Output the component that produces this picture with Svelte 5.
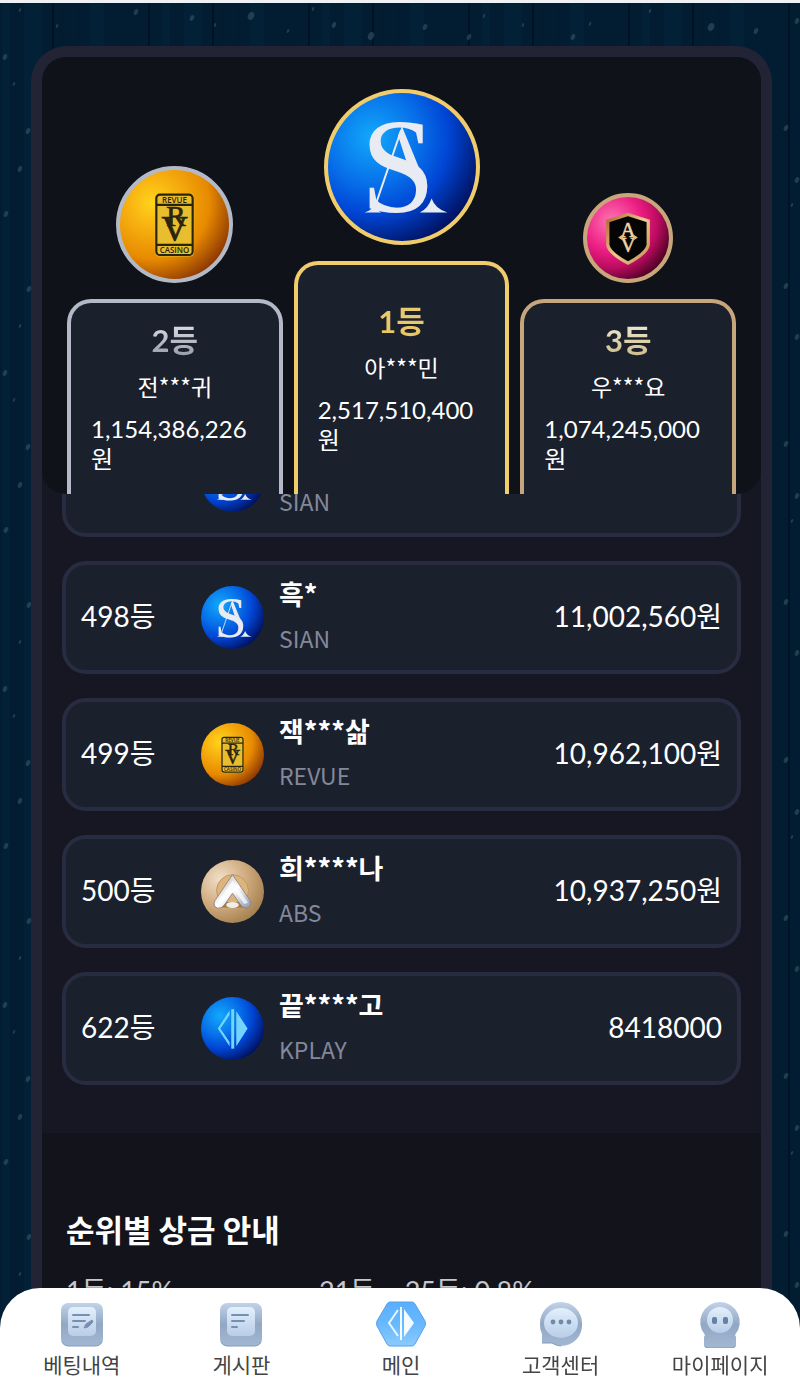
<script lang="ts">
  interface Entry {
    rank: number;
    name: string;
    amount: string;
    site: string;
  }

  interface Prize {
    range: string;
    rate: string;
  }

  const podium: Entry[] = [
    { rank: 2, name: "전***귀", amount: "1,154,386,226원", site: "REVUE" },
    { rank: 1, name: "아***민", amount: "2,517,510,400원", site: "SIAN" },
    { rank: 3, name: "우***요", amount: "1,074,245,000원", site: "AV" },
  ];

  const entries: Entry[] = [
    { rank: 497, name: "", amount: "", site: "SIAN" },
    { rank: 498, name: "흑*", amount: "11,002,560원", site: "SIAN" },
    { rank: 499, name: "잭***삶", amount: "10,962,100원", site: "REVUE" },
    { rank: 500, name: "희****나", amount: "10,937,250원", site: "ABS" },
    { rank: 622, name: "끝****고", amount: "8418000", site: "KPLAY" },
  ];

  const prizes: Prize[] = [
    { range: "1등", rate: "15%" },
    { range: "21등 ~ 25등", rate: "0.8%" },
  ];

  const menu = [
    { id: "bets", label: "베팅내역" },
    { id: "board", label: "게시판" },
    { id: "main", label: "메인" },
    { id: "support", label: "고객센터" },
    { id: "mypage", label: "마이페이지" },
  ];

  // Snow specks for the backdrop tile
  const specks = [
    [20, 7, 1], [57, 23, 1], [136, 9, 2], [192, 15, 2], [215, 22, 1], [251, 13, 3],
    [288, 28, 1], [313, 6, 1], [334, 22, 2], [371, 33, 3], [425, 24, 2], [469, 34, 2],
    [484, 13, 1], [523, 22, 1], [573, 34, 2], [590, 21, 1], [650, 8, 1], [711, 24, 3],
    [756, 28, 2], [797, 18, 2], [5, 54, 2], [14, 81, 1], [28, 128, 2], [20, 166, 2],
    [6, 211, 2], [29, 286, 2], [786, 125, 2], [797, 177, 2], [792, 202, 1], [786, 283, 2],
  ];
</script>

{#snippet badge(site: string, size: number)}
  <svg viewBox="0 0 150 150" role="img" aria-label={site}>
    <defs>
      <radialGradient id="ball-{site}-{size}" cx="0.3" cy="0.3" r="0.8">
        {#if site === "REVUE"}
          <stop offset="0" stop-color="#ffd51c" />
          <stop offset="0.3" stop-color="#f7b010" />
          <stop offset="0.65" stop-color="#e78a00" />
          <stop offset="1" stop-color="#873203" />
        {:else if site === "AV"}
          <stop offset="0" stop-color="#ff75b4" />
          <stop offset="0.45" stop-color="#ec1e83" />
          <stop offset="0.7" stop-color="#bd0c61" />
          <stop offset="1" stop-color="#42001d" />
        {:else if site === "ABS"}
          <stop offset="0" stop-color="#f1dfc9" />
          <stop offset="0.5" stop-color="#d2ae82" />
          <stop offset="1" stop-color="#a27e4d" />
        {:else}
          <stop offset="0" stop-color="#12a9fb" />
          <stop offset="0.4" stop-color="#076fe9" />
          <stop offset="0.65" stop-color="#0045d4" />
          <stop offset="1" stop-color="#000d57" />
        {/if}
      </radialGradient>
      <linearGradient id="metal-{site}-{size}" x1="0" y1="0" x2="1" y2="1">
        <stop offset="0" stop-color={site === "AV" ? "#b0662d" : "#a8a4a0"} />
        <stop offset="0.5" stop-color={site === "AV" ? "#efc98f" : "#ffffff"} />
        <stop offset="1" stop-color={site === "AV" ? "#c58f50" : "#8995ad"} />
      </linearGradient>
      <mask id="cut-{site}-{size}">
        <rect width="150" height="150" fill="#fff" />
        <path d="M44 54Q52 70 72 77Q94 84 98 98L110 84L94 79Q82 72 76 66L64 50Z" fill="#000" />
      </mask>
    </defs>
    <circle cx="75" cy="75" r="75" fill="url(#ball-{site}-{size})" />
    {#if site === "SIAN"}
      <g fill="#e9ebf2">
        <path d="M74 38L47 117" stroke="#e9ebf2" stroke-width="2" />
        <path d="M75 34L94 80Q88 74 80 71L71 43Z" />
        <path d="M37 121Q46 119 46 112Q48 118 54 121Z" />
        <path d="M93 121Q101 118 105 107Q109 118 121 121Z" />
        <text x="33" y="121" font-size="137">S</text>
      </g>
    {:else if site === "REVUE"}
      <rect x="48" y="32" width="54" height="87" rx="6" fill="#e8be2f" />
      <g fill="none" stroke="#29250d" stroke-width="3">
        <rect x="50" y="34" width="50" height="83" rx="5" />
        <path d="M50 48H100M50 103H100" />
      </g>
      <g fill="#29250d" text-anchor="middle">
        <text class="plate" x="75" y="45" font-size="11">REVUE</text>
        <text x="77" y="77" font-size="40" stroke="#29250d">R</text>
        <text x="75" y="98" font-size="50" stroke="#29250d">V</text>
        <text class="plate" x="75" y="114" font-size="11">CASINO</text>
      </g>
    {:else if site === "AV"}
      <path
        d="M75 32L112 44V88Q109 103 75 121Q41 103 38 88V44Z"
        fill="#050505"
        stroke="url(#metal-{site}-{size})"
        stroke-width="6"
      />
      <g fill="#f0d6a7" text-anchor="middle">
        <text x="75" y="74" font-size="38" stroke="#f0d6a7">A</text>
        <text x="75" y="100" font-size="38" stroke="#f0d6a7">V</text>
      </g>
      <path d="M57 74L66 68V80ZM93 74L84 68V80Z" fill="#e4ba77" />
    {:else if site === "ABS"}
      <circle cx="75" cy="73" r="38" fill="#ddb47e" stroke="#bd9159" stroke-width="2" />
      <path d="M46 100H103L112 113H35Z" fill="#a77b42" />
      <ellipse cx="75" cy="107" rx="15" ry="7" fill="#f0eee9" />
      <path
        d="M75 35L117 97Q122 112 108 115Q99 114 93 105L75 79L57 105Q50 116 40 115Q27 110 33 97Z"
        fill="url(#metal-{site}-{size})"
        stroke="#8c8178"
        stroke-width="2"
      />
      <path d="M75 50L112 102L103 105L75 66L47 105L38 102Z" fill="#fff" opacity="0.7" />
    {:else}
      <g fill="#73d5ff">
        <path fill-rule="evenodd" d="M68 32V43L46 75L68 107V117L40 75ZM84 34L111 75L84 117Z" />
        <rect x="72" y="29" width="7" height="94" />
      </g>
    {/if}
  </svg>
{/snippet}

{#snippet menuIcon(id: string)}
  <svg class="menu-icon" viewBox="0 0 52 48" aria-hidden="true">
    <defs>
      <linearGradient id="shell-{id}" x1="0" y1="0" x2="0" y2="1">
        <stop offset="0" stop-color={id === "main" ? "#59afff" : "#c1d3e8"} />
        <stop offset="0.5" stop-color={id === "main" ? "#68b8fd" : "#91a7c4"} />
        <stop offset="1" stop-color={id === "main" ? "#8acbff" : "#a2b8d2"} />
      </linearGradient>
      <linearGradient id="face-{id}" x1="0" y1="0" x2="0" y2="1">
        <stop offset="0" stop-color="#e3effc" />
        <stop offset="1" stop-color="#b8cde7" />
      </linearGradient>
    </defs>
    {#if id === "main"}
      <path
        d="M15 2H37Q39 2 40 4L50 21Q51 24 50 26L40 44Q39 46 37 46H15Q13 46 12 44L2 26Q1 24 2 21L12 4Q13 2 15 2Z"
        fill="url(#shell-{id})"
        stroke="#55a0eb"
      />
      <path d="M23 10L14 23L23 36" fill="none" stroke="#e7f8ff" stroke-width="2" />
      <path d="M25 7H27V40H25ZM29 9L39 23L29 37Z" fill="#f4fcff" />
    {:else if id === "support"}
      <path
        d="M26 2A21 21 0 0 1 47 23A21 21 0 0 1 26 46Q21 46 17 43H7V34A22 22 0 0 1 5 23A21 21 0 0 1 26 2Z"
        fill="url(#shell-{id})"
      />
      <path d="M7 43H17Q22 46 26 46" fill="none" stroke="#819bbb" />
      <ellipse cx="26" cy="23" rx="17" ry="15" fill="url(#face-{id})" />
      <g fill="#6f89a8">
        <circle cx="18" cy="22" r="2.4" />
        <circle cx="26" cy="22" r="2.4" />
        <circle cx="34" cy="22" r="2.4" />
      </g>
    {:else if id === "mypage"}
      <path
        d="M26 2A20 20 0 0 1 41 35L42 37V45Q42 48 39 48H13Q10 48 10 45V37L11 35A20 20 0 0 1 26 2Z"
        fill="url(#shell-{id})"
      />
      <path d="M11 46Q12 48 14 48H38Q40 48 41 46" fill="none" stroke="#819bbb" />
      <circle cx="26" cy="20" r="13" fill="url(#face-{id})" />
      <rect x="18" y="17" width="5" height="7" rx="2" fill="#6480a2" />
      <rect x="29" y="17" width="5" height="7" rx="2" fill="#6480a2" />
    {:else}
      <rect x="5" y="3" width="42" height="43" rx="7" fill="url(#shell-{id})" />
      <path d="M6 42Q8 46 12 46H40Q44 46 46 42" fill="none" stroke="#819bbb" />
      <rect x="12" y="7" width="28" height="29" rx="5" fill="url(#face-{id})" />
      <path d="M17 15H33M17 21H29M17 27H22" fill="none" stroke="#7890b0" stroke-width="2" stroke-linecap="round" />
      {#if id === "bets"}
        <path d="M28 28L30 24L36 20L37 22L32 27Z" fill="#7890b0" stroke="#7890b0" stroke-linejoin="round" />
      {/if}
    {/if}
  </svg>
{/snippet}

<div class="page">
  <svg class="backdrop" aria-hidden="true">
    <defs>
      <pattern id="planks" width="160" height="158" patternUnits="userSpaceOnUse">
        <rect width="160" height="158" fill="#021d31" />
        <path d="M2 0H10V158H2ZM24 0H42V158H24ZM90 0H104V158H90Z" fill="#022136" />
        <path d="M16 0V158M62 0V158M79 0V158M128 0V158" stroke="#03192b" />
        <path d="M53 0V158M149 0V158" stroke="#011323" stroke-width="2" />
      </pattern>
      <pattern id="snow" width="800" height="316" patternUnits="userSpaceOnUse">
        {#each specks as [x, y, r]}
          <ellipse cx={x} cy={y} rx={r} ry={r + 1} fill="#5b7b8c" opacity="0.35" transform="rotate(25 {x} {y})" />
        {/each}
      </pattern>
    </defs>
    <rect width="100%" height="100%" fill="url(#planks)" />
    <rect width="100%" height="100%" fill="url(#snow)" />
  </svg>

  <main class="panel">
    <header class="podium">
      {#each podium as winner}
        <div class="winner place-{winner.rank}">
          <div class="medal">{@render badge(winner.site, 150)}</div>
          <div class="stand">
            <strong class="place">{winner.rank}등</strong>
            <span class="nick">{winner.name}</span>
            <span class="sum">{winner.amount}</span>
          </div>
        </div>
      {/each}
    </header>

    <ol class="ranking">
      {#each entries as entry}
        <li class="row">
          <span class="rank">{entry.rank}등</span>
          <span class="logo">{@render badge(entry.site, 62)}</span>
          <div class="player">
            <strong class="player-name">{entry.name}</strong>
            <span class="player-site">{entry.site}</span>
          </div>
          <span class="amount">{entry.amount}</span>
        </li>
      {/each}
    </ol>

    <section class="prizes">
      <h2>순위별 상금 안내</h2>
      <ul>
        {#each prizes as prize}
          <li>{prize.range}: {prize.rate}</li>
        {/each}
      </ul>
    </section>
  </main>

  <nav class="menu">
    {#each menu as item}
      <a href="#{item.id}">
        {@render menuIcon(item.id)}
        <span>{item.label}</span>
      </a>
    {/each}
  </nav>
</div>

<style>
  :global(body) {
    margin: 0;
    background: #021d31;
  }

  .page {
    position: relative;
    box-sizing: border-box;
    display: flex;
    flex-direction: column;
    height: 100vh;
    overflow: hidden;
    padding: 43px 28px 0 31px;
    border-top: 3px solid #eef1f6;
    color: #fff;
    font-family: Lato, "Noto Sans CJK KR", sans-serif;
  }

  .backdrop {
    position: absolute;
    inset: 0;
    width: 100%;
    height: 100%;
  }

  .panel {
    position: relative;
    display: flex;
    flex: 1 0 auto;
    flex-direction: column;
    border: 11px solid #222436;
    border-bottom: 0;
    border-radius: 36px 36px 0 0;
    background: #161722;
  }

  svg text {
    font-family: "Liberation Serif", serif;
  }

  svg .plate {
    font-family: "Open Sans", sans-serif;
    font-weight: 600;
  }

  .podium {
    position: relative;
    z-index: 1;
    display: flex;
    align-items: flex-end;
    gap: 11px;
    padding: 32px 25px 0;
    border-radius: 24px;
    background: #10121a;
  }

  .winner {
    --metal: #b3b9c6;
    --shine: linear-gradient(#e4e6ea, #8f96a5);
    --medal: 117px;
    display: flex;
    flex: 1 1 0;
    flex-direction: column;
    align-items: center;
    gap: 16px;
    min-width: 0;
  }

  .place-1 {
    --metal: #f0cc6b;
    --shine: linear-gradient(#e6ca72, #ecc660);
    --medal: 156px;
  }

  .place-3 {
    --metal: #c8a67b;
    --shine: linear-gradient(#f3eed9, #c9b882);
    --medal: 90px;
  }

  .medal {
    box-sizing: border-box;
    width: var(--medal);
    height: var(--medal);
    border: 4px solid var(--metal);
    border-radius: 50%;
    background: var(--metal);
  }

  .medal svg,
  .logo svg {
    display: block;
    width: 100%;
    height: 100%;
  }

  .stand {
    box-sizing: border-box;
    display: flex;
    flex-direction: column;
    align-items: center;
    width: 100%;
    height: 195px;
    padding: 17px 20px 0;
    border: 4px solid var(--metal);
    border-bottom: 0;
    border-radius: 24px 24px 0 0;
    background: #1b202d;
  }

  .place-1 .stand {
    height: 233px;
    padding-top: 36px;
  }

  .place {
    background: var(--shine);
    background-clip: text;
    color: transparent;
    font-size: 31px;
    line-height: 40px;
  }

  .nick {
    margin: 8px 0 10px;
    font-family: "Noto Sans CJK KR", sans-serif;
    font-size: 23px;
    line-height: 36px;
  }

  .sum {
    align-self: stretch;
    font-size: 24px;
    line-height: 30px;
  }

  .ranking {
    display: flex;
    flex-direction: column;
    gap: 24px;
    margin: -70px 0 0;
    padding: 0 20px 48px;
    list-style: none;
  }

  .row {
    box-sizing: border-box;
    display: flex;
    align-items: center;
    height: 113px;
    padding: 0 15px;
    border: 4px solid #272c40;
    border-radius: 24px;
    background: #1b202d;
  }

  .rank,
  .amount {
    padding-bottom: 4px;
    font-size: 28px;
    line-height: 40px;
  }

  .rank {
    width: 120px;
  }

  .logo {
    width: 63px;
    height: 63px;
  }

  .player {
    display: flex;
    flex: 1;
    flex-direction: column;
    gap: 8px;
    margin-left: 15px;
    padding-bottom: 4px;
    font-family: "Noto Sans CJK KR", sans-serif;
  }

  .player-name {
    min-height: 36px;
    font-size: 27px;
    line-height: 36px;
  }

  .player-site {
    color: #83889a;
    font-size: 23px;
    line-height: 36px;
  }

  .prizes {
    flex: 1;
    padding: 72px 24px 0;
    background: #12131b;
  }

  .prizes h2 {
    margin: 0 0 20px;
    font-family: "Noto Sans CJK KR", sans-serif;
    font-size: 31px;
    line-height: 48px;
  }

  .prizes ul {
    display: grid;
    grid-template-columns: 253px 1fr;
    margin: 0;
    padding: 0;
    color: #c6c7ca;
    font-size: 27px;
    line-height: 36px;
    list-style: none;
  }

  .menu {
    position: fixed;
    inset: auto 0 0;
    z-index: 2;
    display: flex;
    box-sizing: border-box;
    height: 100px;
    padding: 12px 0 0 2px;
    border-radius: 40px 40px 0 0;
    background: #fff;
  }

  .menu a {
    display: flex;
    flex: 1;
    flex-direction: column;
    align-items: center;
    color: #444;
    font-family: "Noto Sans CJK KR", sans-serif;
    font-size: 21px;
    line-height: 32px;
    text-decoration: none;
  }

  .menu-icon {
    width: 52px;
    height: 48px;
  }
</style>
